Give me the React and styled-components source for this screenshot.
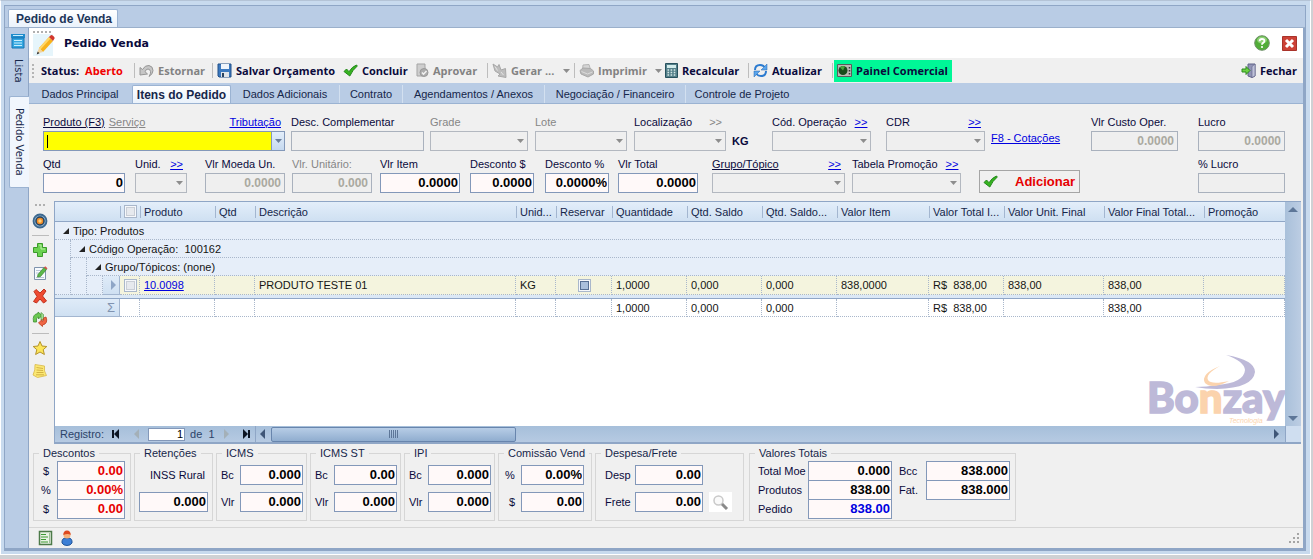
import React, { useId } from "react";
import styled, { createGlobalStyle, css } from "styled-components";

const GlobalStyle = createGlobalStyle`
  * {
    box-sizing: border-box;
  }

  body {
    margin: 0;
    background: #cfd1d4;
    color: #0a0a3c;
    font-family: "Liberation Sans", Arial, sans-serif;
    font-size: 11px;
  }

  button, input, select {
    font-family: inherit;
    font-size: inherit;
    color: inherit;
    margin: 0;
    border-radius: 0;
  }

  svg {
    display: block;
    flex: none;
  }
`;

/* ---------- window ---------- */

const Page = styled.div`
  display: flex;
  min-height: 100vh;
  padding: 0 2px 4px 0;
`;

const Frame = styled.div`
  flex: 1;
  min-width: 0;
  display: flex;
  border: 1px solid #fff;
  border-top-color: #b4c3d6;
  background: #c8daee;
  padding: 4px 4px 3px 3px;
`;

const Window = styled.div`
  flex: 1;
  min-width: 0;
  display: flex;
  flex-direction: column;
  border: 1px solid #8fa6c6;
  background: #b9cce5;
`;

const WindowTabs = styled.div`
  display: flex;
  align-items: flex-end;
  height: 22px;
  padding-left: 3px;
  border-bottom: 1px solid #9bb0cb;
`;

const WindowTab = styled.button`
  height: 18px;
  padding: 0 5px 0 7px;
  border: 1px solid #9bb3d2;
  border-bottom: 0;
  border-radius: 2px 2px 0 0;
  background: linear-gradient(#fff, #eaf2fb);
  color: #1d3558;
  font-size: 12px;
  font-weight: bold;
  white-space: nowrap;
`;

const Body = styled.div`
  flex: 1;
  display: flex;
  min-width: 0;
  border-right: 2px solid #8fa6c6;
  border-bottom: 2px solid #8fa6c6;
`;

const Rail = styled.nav`
  width: 24px;
  flex: none;
  display: flex;
  flex-direction: column;
  align-items: flex-end;
  border-right: 1px solid #8fa6c6;
`;

const RailTab = styled.button`
  display: flex;
  align-items: center;
  justify-content: center;
  gap: 10px;
  width: 20px;
  height: ${(p) => p.$h}px;
  padding: ${(p) => (p.$active ? 0 : "0 0 8px")};
  border: 0;
  background: none;
  writing-mode: vertical-rl;
  color: #16264a;
  font-family: "DejaVu Sans", Verdana, sans-serif;
  font-size: 10px;

  ${(p) => p.$active && css`
    margin-right: -1px;
    border: 1px solid #9bb3d2;
    border-right: 0;
    border-radius: 2px 0 0 2px;
    background: #f1f6fd;
  `}
`;

const Main = styled.main`
  flex: 1;
  min-width: 0;
  display: flex;
  flex-direction: column;
  background: #f0f0f0;
`;

const TitleBar = styled.header`
  display: flex;
  align-items: center;
  height: 30px;
  padding: 0 6px 0 4px;
  background: #fff;
`;

const TitleIcon = styled.div`
  display: flex;
  flex-direction: column;
  gap: 1px;
`;

const Title = styled.h1`
  flex: 1;
  margin: 0 0 0 9px;
  padding-top: 2px;
  font-family: "DejaVu Sans", Verdana, sans-serif;
  font-size: 11px;
  line-height: 16px;
`;

const IconButton = styled.button`
  display: flex;
  align-items: center;
  justify-content: center;
  width: ${(p) => p.$w || 16}px;
  height: ${(p) => p.$h || 16}px;
  padding: 0;
  border: 0;
  background: ${(p) => p.$bg || "none"};
`;

const TitleActions = styled.div`
  display: flex;
  gap: 11px;
`;

/* ---------- toolbar ---------- */

const Toolbar = styled.div`
  display: flex;
  align-items: center;
  height: 25px;
  padding: 0 3px;
  font-family: "Open Sans", "Noto Sans", sans-serif;
  font-size: 11px;
  font-weight: bold;
  white-space: nowrap;
`;

const Grip = styled.span`
  width: 2px;
  height: 14px;
  background: repeating-linear-gradient(#b5b5b5 0 2px, transparent 2px 4px);
`;

const Status = styled.span`
  display: flex;
  gap: 6px;
  width: 99px;
  padding-left: 7px;
`;

const Open = styled.span`
  color: #f00000;
`;

const Tool = styled.button`
  display: flex;
  align-items: center;
  gap: 4px;
  height: 22px;
  width: ${(p) => p.$w}px;
  padding: 0 3px;
  border: 0;
  background: ${(p) => (p.$green ? "#00f797" : "none")};
  color: #0a0a3c;
  font-weight: bold;
  white-space: nowrap;

  &:disabled {
    color: #828282;
  }
`;

const Divider = styled.span`
  width: 1px;
  height: 15px;
  margin: 0 1px;
  background: #bdbdbd;
`;

const Spacer = styled.span`
  flex: 1;
`;

/* ---------- page tabs ---------- */

const Tabs = styled.div`
  display: flex;
  align-items: flex-end;
  height: 21px;
  background: #b9cce5;
  border-bottom: 1px solid #9bb3d2;
`;

const Tab = styled.button`
  height: 18px;
  width: ${(p) => p.$w}px;
  padding: 0;
  border: 0;
  border-right: 1px solid ${(p) => (p.$line ? "#d3e0f0" : "transparent")};
  background: none;
  color: #16264a;
  white-space: nowrap;

  ${(p) => p.$active && css`
    border: 1px solid #9bb3d2;
    border-bottom: 0;
    border-radius: 2px 2px 0 0;
    background: linear-gradient(#fff, #eaf2fb);
    font-size: 12px;
    font-weight: bold;
  `}
`;

/* ---------- form ---------- */

const Form = styled.form`
  display: flex;
  flex-direction: column;
  gap: 4px;
  padding: 9px 18px 8px 14px;
`;

const FormRow = styled.div`
  display: flex;
  align-items: flex-end;
`;

const FieldBox = styled.div`
  width: ${(p) => p.$w}px;
  margin-left: ${(p) => p.$gap || 0}px;
  flex: none;
`;

const FieldHead = styled.div`
  display: flex;
  gap: 4px;
  height: 18px;
  padding-right: 4px;
  line-height: 18px;
  white-space: nowrap;
`;

const FieldLabel = styled.label`
  color: ${(p) => (p.$dim ? "#868686" : "inherit")};
  text-decoration: ${(p) => (p.$under ? "underline" : "none")};
`;

const Anchor = styled.a`
  color: ${(p) => (p.$dim ? "#868686" : "#0000e0")};
  text-decoration: ${(p) => (p.$plain ? "none" : "underline")};
`;

const TextInput = styled.input`
  display: block;
  width: 100%;
  min-width: 0;
  height: 20px;
  padding: 0 1px 1px 2px;
  border: 1px solid #8398b9;
  background: #fff9f9;
  color: ${(p) => p.$color || "#000"};
  font-size: 13px;
  font-weight: bold;
  text-align: right;
  outline: 0;

  &:disabled {
    padding-right: 3px;
    border-color: #a9b1bd;
    background: #efefef;
    color: #aaa9a0;
    font-size: 12px;
  }
`;

const SelectBox = styled.div`
  display: grid;
  align-items: center;

  > * {
    grid-area: 1 / 1;
  }

  > svg {
    justify-self: end;
    margin-right: 4px;
    pointer-events: none;
  }
`;

const Select = styled.select`
  appearance: none;
  width: 100%;
  height: 20px;
  padding: 0 16px 0 3px;
  border: 1px solid #b3b8c0;
  background: #efefef;
  opacity: 1;
`;

const Combo = styled.div`
  display: flex;
  align-items: center;
  height: 20px;
  border: 1px solid #8398b9;
  background: #ff0;
`;

const Caret = styled.span`
  width: 1px;
  height: 13px;
  margin-left: 3px;
  background: #000;
`;

const ComboInput = styled.input`
  flex: 1;
  min-width: 0;
  height: 18px;
  padding: 0 3px;
  border: 0;
  background: none;
  outline: 0;
`;

const ComboButton = styled(IconButton)`
  border-left: 1px solid #8398b9;
`;

const UnitText = styled.strong`
  width: 17px;
  margin-left: 6px;
  line-height: 20px;
`;

const Quotes = styled(Anchor)`
  margin: 0 auto 0 6px;
  line-height: 26px;
  white-space: nowrap;
`;

const AddButton = styled.button`
  display: flex;
  align-items: center;
  justify-content: space-between;
  width: 101px;
  height: 23px;
  margin: 0 auto 0 18px;
  padding: 0 4px 0 3px;
  border: 1px solid #a5a5a5;
  background: #f0f0f0;
  color: #e60000;
  font-size: 13px;
  font-weight: bold;
`;

/* ---------- grid ---------- */

const Middle = styled.section`
  flex: 1;
  display: flex;
  min-height: 0;
  padding-right: 2px;
`;

const SideTools = styled.div`
  display: flex;
  flex-direction: column;
  align-items: center;
  gap: 7px;
  width: 25px;
  padding: 3px 3px 0 0;
  flex: none;
`;

const DotLine = styled.span`
  width: ${(p) => p.$w}px;
  height: 2px;
  background: repeating-linear-gradient(90deg, #b0b0b0 0 2px, transparent 2px 4px);
`;

const SideLine = styled.span`
  width: 17px;
  height: 1px;
  margin: -1px 0;
  background: #bcbcbc;
`;

const GridPanel = styled.div`
  flex: 1;
  min-width: 0;
  display: flex;
  flex-direction: column;
  border: 1px solid #8fa6c6;
  border-right: 0;
  border-bottom: 2px solid #8fa6c6;
  background: #fff;
`;

const GridView = styled.div`
  flex: 1;
  display: flex;
  min-height: 0;
`;

const GridContent = styled.div`
  position: relative;
  flex: 1;
  min-width: 0;
  overflow: hidden;
`;

const Table = styled.table`
  width: 100%;
  table-layout: fixed;
  border-collapse: separate;
  border-spacing: 0;
  color: #141414;
`;

const Th = styled.th`
  height: 20px;
  padding: 0 2px 0 4px;
  border-bottom: 1px solid #8fa6c6;
  background:
    linear-gradient(#a3b6d0, #a3b6d0) 0 4px / ${(p) => (p.$first ? 0 : 1)}px 12px no-repeat,
    linear-gradient(#e3eefa, #cfe0f2);
  color: #16264a;
  font-weight: normal;
  text-align: left;
  white-space: nowrap;
`;

const dotted = "1px dotted #a9b7cb";

const Indent = styled.td`
  padding: 0;
  border-right: ${dotted};
  border-bottom: ${(p) => (p.$last ? dotted : "0")};
  background: #e6eef9;
`;

const GroupCell = styled.td`
  height: 18px;
  padding: 0 0 0 8px;
  border-bottom: ${dotted};
  background: #e6eef9;
  white-space: pre;
`;

const GroupText = styled.span`
  display: flex;
  align-items: center;
  gap: 4px;
  line-height: 16px;
`;

const Td = styled.td`
  height: ${(p) => (p.$sum ? 18 : 19)}px;
  padding: 0 3px 0 4px;
  border-right: ${dotted};
  border-bottom: ${dotted};
  background: ${(p) => (p.$sum ? "#fff" : "#f4f4de")};
  line-height: 14px;
  white-space: pre;
`;

const RowHead = styled.td`
  padding: 0 4px;
  border-right: 1px solid #a3b6d0;
  border-bottom: 1px solid #a3b6d0;
  background: linear-gradient(#dfebf8, #cfe0f2);
  color: #8093b0;
  font-size: 13px;
  line-height: 14px;
  text-align: right;
`;

const SplitCell = styled.td`
  height: 4px;
  padding: 0;
  border-bottom: 1px solid #8fa6c6;
  background: #dbe8f6;
`;

const Check = styled.input`
  appearance: none;
  display: block;
  width: 13px;
  height: 13px;
  margin: ${(p) => (p.$center ? "0 auto" : "0")};
  border: 1px solid #a9b7cb;
  background: ${(p) => (p.$fill ? "#a9bfdc" : "#e6e9ee")};
  box-shadow: inset 0 0 0 1px #f6f8fb, inset 0 0 0 2px ${(p) => (p.$fill ? "#566f94" : "#c9ced6")};
`;

const Logo = styled.div`
  position: absolute;
  right: 0;
  bottom: 0;
`;

const VScroll = styled.div`
  display: flex;
  flex-direction: column;
  align-items: center;
  justify-content: space-between;
  width: 16px;
  padding: 2px 0;
  background: linear-gradient(90deg, #a9c0da, #bccde3);
`;

const NavBar = styled.div`
  display: flex;
  align-items: center;
  height: 16px;
  background: linear-gradient(#a6bfda, #b6cae2);
  color: #2c4368;
`;

const Pager = styled.div`
  display: flex;
  align-items: center;
  width: 201px;
  height: 16px;
  padding-left: 5px;
  border-right: 1px solid #8fa6c6;
  white-space: pre;
`;

const PageInput = styled.input`
  width: 37px;
  height: 13px;
  margin: 0 5px 0 4px;
  padding: 0 1px;
  border: 1px solid #8398b9;
  background: #fff;
  color: #000;
  text-align: right;
`;

const ScrollTrack = styled.div`
  flex: 1;
  display: flex;
  align-items: center;
  padding: 0 3px 0 1px;
`;

const Thumb = styled.div`
  display: flex;
  justify-content: center;
  align-items: center;
  width: 245px;
  height: 15px;
  margin: 0 auto 0 2px;
  border: 1px solid #6885ad;
  border-radius: 2px;
  background: linear-gradient(#b7cde6, #90adcf);
`;

const ThumbGrip = styled.span`
  width: 9px;
  height: 8px;
  background: repeating-linear-gradient(90deg, #5d7698 0 1px, transparent 1px 2px);
`;

const Corner = styled.span`
  width: 16px;
  height: 16px;
  border-left: 1px solid #8fa6c6;
  background: #cfdef0;
`;

/* ---------- totals ---------- */

const Totals = styled.section`
  display: flex;
  align-items: flex-start;
  gap: 3px;
  height: 83px;
  padding: 2px 4px;
`;

const Box = styled.fieldset`
  width: ${(p) => p.$w}px;
  height: 75px;
  min-width: 0;
  margin: 0 0 0 ${(p) => p.$ml || 0}px;
  padding: ${(p) => (p.$tight ? 1 : 5)}px ${(p) => p.$pr}px 0 4px;
  border: 1px solid #d6d6d6;
`;

const Legend = styled.legend`
  margin-left: 1px;
  padding: 0 4px;
  color: #16264a;
  line-height: 14px;
  white-space: nowrap;
`;

const Lines = styled.div`
  display: grid;
  grid-template-columns: ${(p) => p.$cols};
  row-gap: ${(p) => (p.$tight ? 0 : 7)}px;
  align-items: center;

  ${(p) => p.$tight && css`
    grid-auto-rows: 19px;
    align-items: start;
  `}
`;

const LineLabel = styled.label`
  padding-left: ${(p) => p.$pl || 0}px;
  line-height: 20px;
  white-space: nowrap;
`;

const FreteSearch = styled(IconButton)`
  justify-self: end;
`;

const StatusBar = styled.footer`
  display: flex;
  align-items: center;
  gap: 7px;
  height: 21px;
  padding: 0 3px 0 9px;
  border-top: 1px solid #d6d6d6;
`;

/* ---------- icons ---------- */

const Down = ({ color = "#8d8d8d" }) => (
  <svg width="7" height="4"><path d="M0 0h7L3.5 4z" fill={color} /></svg>
);

const Tri = ({ dir, color = "#3f5677", bar }) => {
  const d = {
    left: "M8 1v10L3 6z",
    right: "M4 1v10l5-5z",
    up: "M1 8h10L6 3z",
    down: "M1 4h10L6 9z",
  }[dir];
  return (
    <svg width="12" height="12" viewBox="0 0 12 12" fill={color}>
      <path d={d} />
      {bar && <path d={dir === "left" ? "M1 2h2v8H1z" : "M9 2h2v8H9z"} />}
    </svg>
  );
};

const Expanded = () => (
  <svg width="6" height="6"><path d="M6 0v6H0z" fill="#222" /></svg>
);

const ListIcon = () => (
  <svg width="16" height="16" viewBox="0 0 16 16">
    <path d="M1 1h14v4H1z" fill="#1f8ccc" />
    <path d="M2 5h12v10H2z" fill="#35a7e0" stroke="#1674b5" />
    <path d="M3 2.5h10M4 7.5h8M4 10h8M4 12.5h8" stroke="#c8efff" />
  </svg>
);

const PencilIcon = () => (
  <svg width="22" height="22" viewBox="0 0 22 22">
    <path d="M0 0h20v22H0z" fill="#e6f5fb" />
    <path d="M6 14 16 3l4 4L10 18z" fill="#f7b21c" />
    <path d="m6 14 10-11 1.500 1.500L7.500 15.500z" fill="#ffd768" />
    <path d="m16 3 1.500-1.500q1-1 2.500.2l1 1q1.200 1.200.2 2.300L20 7z" fill="#d2372c" />
    <path d="M6 14 4 19.500 10 18z" fill="#f1d3a0" />
    <path d="m4.700 17.400-1 3 2.800-1.200z" fill="#333" />
  </svg>
);

const HelpIcon = () => (
  <svg width="16" height="16" viewBox="0 0 16 16">
    <circle cx="8" cy="8" r="7.300" fill="#51ad38" stroke="#6e8f68" />
    <ellipse cx="8" cy="5" rx="5" ry="3.500" fill="#8dd074" />
    <path d="M5.600 6.200Q5.700 4 8 4q2.400 0 2.400 2 0 1.200-1.300 1.900Q8 8.500 8 9.700" fill="none" stroke="#fff" strokeWidth="1.800" />
    <circle cx="8" cy="12" r="1.100" fill="#fff" />
  </svg>
);

const CloseIcon = () => (
  <svg width="15" height="15" viewBox="0 0 15 15">
    <path d="M.5.5h14v14H.5z" fill="#cc4136" stroke="#a9332a" />
    <path d="m4 4 7 7m0-7-7 7" stroke="#fff" strokeWidth="3" />
  </svg>
);

const UndoIcon = () => (
  <svg width="15" height="15" viewBox="0 0 15 15">
    <path d="M1 12V4.500l2.500 2Q6 2 10 2.500q4 .8 4 5Q14 11 10 13.500q2-3 1.500-5Q11 6 9 6 7 6 6 8.700L8.500 11z" fill="#c6c6c6" stroke="#969696" />
  </svg>
);

const SaveIcon = () => (
  <svg width="15" height="15" viewBox="0 0 15 15">
    <path d="M1 1h13v13H2l-1-1z" fill="#3b79bf" stroke="#235089" />
    <path d="M4 1h8v5H4z" fill="#eef4fb" />
    <path d="M4 9h8v5H4z" fill="#dfe4ea" />
    <path d="M5 10h2v4H5z" fill="#28425f" />
  </svg>
);

const CheckIcon = () => (
  <svg width="15" height="15" viewBox="0 0 15 15">
    <path d="M1 8.500 3.500 6 6 8.700Q9 3.700 13.500 2l.8 1Q9.500 7 6.800 13z" fill="#37b420" stroke="#22861a" />
  </svg>
);

const ApproveIcon = () => (
  <svg width="13" height="15" viewBox="0 0 13 15">
    <path d="M1 1h8v3l1 7-3 2H1z" fill="#cecece" stroke="#a5a5a5" />
    <circle cx="8" cy="9.500" r="4" fill="#adadad" stroke="#999" />
    <path d="m6 9.500 1.500 1.700L10.500 8" fill="none" stroke="#f3f3f3" strokeWidth="1.500" />
  </svg>
);

const GenerateIcon = () => (
  <svg width="15" height="15" viewBox="0 0 15 15">
    <path d="m1 1 4.500 3L7 1.500 9 7l4.500-1.500.5 9-8-1.500 2-2-5-3z" fill="#bdbdbd" stroke="#a8a8a8" />
    <path d="m3 3.500 2.500 4M9 9l2.500 3" stroke="#e4e4e4" />
  </svg>
);

const PrinterIcon = () => (
  <svg width="15" height="15" viewBox="0 0 15 15">
    <path d="m4 2 6-.5 1.500 5-8 .5z" fill="#d6d6d6" stroke="#b5b5b5" />
    <path d="m1 7.500 3-2.500 7.500.5L14.500 8v3L9 14l-7-3z" fill="#bababa" stroke="#a8a8a8" />
    <path d="m2.500 8.500 6 2.500 5-2" fill="none" stroke="#dcdcdc" />
  </svg>
);

const CalcIcon = () => (
  <svg width="13" height="15" viewBox="0 0 13 15">
    <path d="M.5.5h12v14H.5z" fill="#54808a" stroke="#28525f" />
    <path d="M2 2h9v3H2z" fill="#d3ecec" />
    <path d="M2.500 7h8M2.500 9.500h8M2.500 12h8" stroke="#d5e8e8" strokeWidth="1.500" strokeDasharray="1.600 1.500" />
  </svg>
);

const RefreshIcon = () => (
  <svg width="15" height="15" viewBox="0 0 15 15">
    <path d="M2 7q0-5 5-5 3 0 4.500 2" fill="none" stroke="#2c7bd0" strokeWidth="2" />
    <path d="M14 1v6H8z" fill="#5aa5ec" stroke="#2465b0" strokeWidth=".5" />
    <path d="M13 8q0 5-5 5-3 0-4.500-2" fill="none" stroke="#2c7bd0" strokeWidth="2" />
    <path d="M1 14V8h6z" fill="#5aa5ec" stroke="#2465b0" strokeWidth=".5" />
  </svg>
);

const PanelIcon = () => (
  <svg width="15" height="13" viewBox="0 0 15 13">
    <path d="M.5.5h14v12H.5z" fill="#b9b9b4" stroke="#5b5b5b" />
    <circle cx="6" cy="6.500" r="4.500" fill="#184c1d" />
    <path d="M6 6.500 3 3.500a4.500 4.500 0 0 1 5-1z" fill="#47a63c" />
    <path d="M12.500 3v1.500m0 1.500v1.500m0 1.500v1.500" stroke="#333" strokeWidth="1.500" />
  </svg>
);

const ExitIcon = () => (
  <svg width="15" height="15" viewBox="0 0 15 15">
    <path d="m7 1 7 0v12l-3 1.500L7 13z" fill="#9093b5" stroke="#5f6288" />
    <path d="M11 3.500 14 1v12l-3 1.500z" fill="#bfc2da" stroke="#5f6288" strokeWidth=".6" />
    <path d="M1 6h4V3.500L9 7.500 5 11.500V9H1z" fill="#6bd142" stroke="#2c8a1c" />
  </svg>
);

const TargetIcon = () => (
  <svg width="16" height="16" viewBox="0 0 16 16">
    <circle cx="8" cy="8" r="6.500" fill="#8fb4d3" stroke="#3c688f" strokeWidth="1.800" />
    <circle cx="8" cy="8" r="4" fill="#f08a25" stroke="#24435f" strokeWidth="1.500" />
    <circle cx="8" cy="8" r="1.700" fill="#ffd27a" />
  </svg>
);

const PlusIcon = () => (
  <svg width="16" height="16" viewBox="0 0 16 16">
    <path d="M5.500 1.500h5v4h4v5h-4v4h-5v-4h-4v-5h4z" fill="#6cd250" stroke="#3c9a2b" />
    <path d="M7 3h2v4h4" fill="none" stroke="#b7f0a3" />
  </svg>
);

const EditIcon = () => (
  <svg width="16" height="16" viewBox="0 0 16 16">
    <path d="M2.500 2.500h11v12h-11z" fill="#f7fafd" stroke="#7f93ad" />
    <path d="M4 5.500h5M4 8h4M4 12.500h8" stroke="#b8c5d6" />
    <path d="m6 9.500 6-7 2.500 2-6 7L5.500 12z" fill="#5cb84a" stroke="#38812b" strokeWidth=".7" />
    <path d="m12 2.500 1.200-1.200 2.300 2-1 1.200z" fill="#d9534a" />
  </svg>
);

const DeleteIcon = () => (
  <svg width="16" height="16" viewBox="0 0 16 16">
    <path d="m2 3.500 2-2L8 5l4-4 2 2-3.500 5 4 5-3 2L8 11l-3.500 4-3-1.500L5 8.500z" fill="#ee4a30" stroke="#c0321d" />
  </svg>
);

const SwapIcon = () => (
  <svg width="16" height="16" viewBox="0 0 16 16">
    <path d="M1.500 11Q0 3 6 2.500V1l4 3.500L6.500 8V6Q3.500 6.500 4.500 11z" fill="#6cc850" stroke="#3d9030" strokeWidth=".8" />
    <path d="M9 4V1.500l2.500 2V9H9z" fill="#a5dc92" stroke="#3d9030" strokeWidth=".6" />
    <path d="M14 6q2.500 6.500-3.500 8V15.500L6.500 12 10 8.500v2Q12.500 10 11.500 7z" fill="#ef6544" stroke="#bb3c1f" strokeWidth=".8" />
  </svg>
);

const StarIcon = () => (
  <svg width="16" height="16" viewBox="0 0 16 16">
    <path d="m8 1.500 2 4.500 4.800.5-3.600 3.200 1.200 4.800L8 12l-4.400 2.500 1.200-4.800L1.200 6.500 6 6z" fill="#fce55a" stroke="#b5932a" />
  </svg>
);

const NoteIcon = () => (
  <svg width="16" height="16" viewBox="0 0 16 16">
    <path d="M3 1.500 12.500 3q-1 5 2 9.500L5.500 14.500 1 12Q3.500 7 3 1.500z" fill="#fbe873" stroke="#d8b847" strokeWidth=".8" />
    <path d="m4.500 4.500 6.500 1M4.500 7l6.500.5M4.500 9.500h7M4 11.800h8" stroke="#c9a33a" strokeWidth=".8" />
  </svg>
);

const SearchIcon = () => (
  <svg width="17" height="17" viewBox="0 0 17 17">
    <circle cx="6.500" cy="6.500" r="4.500" fill="#fafafa" stroke="#c9c9c9" strokeWidth="1.500" />
    <path d="m10 10 5 5" stroke="#8a8a8a" strokeWidth="3" />
  </svg>
);

const SheetIcon = () => (
  <svg width="15" height="16" viewBox="0 0 15 16">
    <path d="M1.500 1.500h12v13h-12z" fill="#e8f3e4" stroke="#4c7a48" strokeWidth="1.500" />
    <path d="M3 4.500h5M3 7h7M3 9.500h5M3 12h7" stroke="#3e9a35" strokeWidth="1.200" />
    <path d="M11.500 3v10" stroke="#9dbf98" />
  </svg>
);

const UserIcon = () => (
  <svg width="14" height="16" viewBox="0 0 14 16">
    <path d="M2 13q-.5-5 4-5h2q4.500 0 4 5-1.500 2.500-5 2.500T2 13z" fill="#3c7fd6" stroke="#225699" />
    <circle cx="7" cy="5" r="3.500" fill="#f6b27a" />
    <path d="M3.300 5q0-4.500 3.700-4.500T10.700 5Q8 3 3.300 5z" fill="#dd4a1f" />
  </svg>
);

const GripCorner = () => (
  <svg width="11" height="11" viewBox="0 0 11 11" fill="#a5a5a5">
    <path d="M8 0h2v2H8zM8 4h2v2H8zM4 4h2v2H4zM8 8h2v2H8zM4 8h2v2H4zM0 8h2v2H0z" />
  </svg>
);

const BonzayLogo = () => (
  <svg width="140" height="72" viewBox="0 0 140 72" role="img" aria-label="Bonzay Tecnologia">
    <path d="M81 1q29 5 29 17-2 16-38 17-12 0-22-2 12 0 22-2 27-2 28-15Q99 7 81 1z" fill="#bdb9d8" />
    <path d="M75 12q-15 8-12 14 3 5 21 1-17 9-24 2-5-9 15-17z" fill="#fbd3ad" />
    <g fontFamily="Lato, sans-serif" fontWeight="900" fontSize="42" fill="#bdb9d8" stroke="#bdb9d8" strokeWidth="1.500">
      <text x="2" y="59">Bo<tspan fill="#fbd3ad" stroke="#fbd3ad">n</tspan>zay</text>
    </g>
    <text x="84" y="69" fontFamily="Liberation Sans, sans-serif" fontStyle="italic" fontSize="7" fill="#fbd3ad">Tecnologia</text>
  </svg>
);

/* ---------- parts ---------- */

const Field = ({ label, w, gap, link, linkDim, dim, under, select, value = "", disabled }) => {
  const id = useId();
  return (
    <FieldBox $w={w} $gap={gap}>
      <FieldHead>
        <FieldLabel htmlFor={id} $dim={dim} $under={under}>{label}</FieldLabel>
        {link && <Spacer />}
        {link && <Anchor href="#" $dim={linkDim} $plain={linkDim}>&gt;&gt;</Anchor>}
      </FieldHead>
      {select ? (
        <SelectBox>
          <Select id={id} disabled><option value=""></option></Select>
          <Down />
        </SelectBox>
      ) : (
        <TextInput id={id} defaultValue={value} disabled={disabled} />
      )}
    </FieldBox>
  );
};

const Line = ({ label, value, color, pl }) => {
  const id = useId();
  return (
    <>
      <LineLabel htmlFor={id} $pl={pl}>{label}</LineLabel>
      <TextInput id={id} defaultValue={value} $color={color} />
    </>
  );
};

const tabs = [
  { text: "Dados Principal", w: 103 },
  { text: "Itens do Pedido", w: 99, active: true },
  { text: "Dados Adicionais", w: 109, line: true },
  { text: "Contrato", w: 63, line: true },
  { text: "Agendamentos / Anexos", w: 142, line: true },
  { text: "Negociação / Financeiro", w: 141, line: true },
  { text: "Controle de Projeto", w: 113 },
];

const columns = [
  { title: "Produto", w: 75 },
  { title: "Qtd", w: 40 },
  { title: "Descrição" },
  { title: "Unid...", w: 40 },
  { title: "Reservar", w: 56 },
  { title: "Quantidade", w: 75 },
  { title: "Qtd. Saldo", w: 75 },
  { title: "Qtd. Saldo...", w: 75 },
  { title: "Valor Item", w: 92 },
  { title: "Valor Total I...", w: 75 },
  { title: "Valor Unit. Final", w: 100 },
  { title: "Valor Final Total...", w: 100 },
  { title: "Promoção", w: 81 },
];

const summary = ["", "", "", "", "", "1,0000", "0,000", "0,000", "", "R$  838,00", "", "838,00", ""];

const ItemsTable = () => (
  <Table>
    <colgroup>
      <col style={{ width: 16 }} />
      <col style={{ width: 16 }} />
      <col style={{ width: 16 }} />
      <col style={{ width: 17 }} />
      <col style={{ width: 20 }} />
      {columns.map((c) => <col key={c.title} style={{ width: c.w }} />)}
    </colgroup>
    <thead>
      <tr>
        <Th colSpan={4} $first />
        <Th><Check type="checkbox" aria-label="Selecionar todos" /></Th>
        {columns.map((c) => <Th key={c.title}>{c.title}</Th>)}
      </tr>
    </thead>
    <tbody>
      <tr>
        <GroupCell colSpan={18}><GroupText><Expanded />Tipo: Produtos</GroupText></GroupCell>
      </tr>
      <tr>
        <Indent />
        <GroupCell colSpan={17}><GroupText><Expanded />{"Código Operação:  100162"}</GroupText></GroupCell>
      </tr>
      <tr>
        <Indent />
        <Indent />
        <GroupCell colSpan={16}><GroupText><Expanded />Grupo/Tópicos: (none)</GroupText></GroupCell>
      </tr>
      <tr>
        <Indent $last />
        <Indent $last />
        <Indent $last />
        <RowHead><Tri dir="right" color="#8fa6c6" /></RowHead>
        <Td><Check type="checkbox" aria-label="Selecionar item" /></Td>
        <Td><Anchor href="#">10.0098</Anchor></Td>
        <Td />
        <Td>PRODUTO TESTE 01</Td>
        <Td>KG</Td>
        <Td><Check type="checkbox" $center $fill aria-label="Reservar" /></Td>
        <Td>1,0000</Td>
        <Td>0,000</Td>
        <Td>0,000</Td>
        <Td>838,0000</Td>
        <Td>{"R$  838,00"}</Td>
        <Td>838,00</Td>
        <Td>838,00</Td>
        <Td />
      </tr>
      <tr>
        <SplitCell colSpan={18} />
      </tr>
      <tr>
        <RowHead colSpan={4}>Σ</RowHead>
        <Td $sum />
        {summary.map((v, i) => <Td key={i} $sum>{v}</Td>)}
      </tr>
    </tbody>
  </Table>
);

const App = () => {
  return (
    <>
      <GlobalStyle />
      <Page>
        <Frame>
          <Window>
            <WindowTabs>
              <WindowTab>Pedido de Venda</WindowTab>
            </WindowTabs>
            <Body>
              <Rail>
                <RailTab $h={68}><ListIcon />Lista</RailTab>
                <RailTab $h={92} $active>Pedido Venda</RailTab>
              </Rail>
              <Main>
                <TitleBar>
                  <TitleIcon>
                    <DotLine $w={18} />
                    <PencilIcon />
                  </TitleIcon>
                  <Title>Pedido Venda</Title>
                  <TitleActions>
                    <IconButton aria-label="Ajuda"><HelpIcon /></IconButton>
                    <IconButton aria-label="Fechar janela"><CloseIcon /></IconButton>
                  </TitleActions>
                </TitleBar>

                <Toolbar>
                  <Grip />
                  <Status>Status: <Open>Aberto</Open></Status>
                  <Divider />
                  <Tool $w={75} disabled><UndoIcon />Estornar</Tool>
                  <Divider />
                  <Tool $w={126}><SaveIcon />Salvar Orçamento</Tool>
                  <Tool $w={73}><CheckIcon />Concluir</Tool>
                  <Tool $w={73} disabled><ApproveIcon />Aprovar</Tool>
                  <Divider />
                  <Tool $w={84} disabled><GenerateIcon />Gerar ...<Spacer /><Down /></Tool>
                  <Divider />
                  <Tool $w={86} disabled><PrinterIcon />Imprimir<Spacer /><Down /></Tool>
                  <Tool $w={85}><CalcIcon />Recalcular</Tool>
                  <Divider />
                  <Tool $w={81}><RefreshIcon />Atualizar</Tool>
                  <Divider />
                  <Tool $w={118} $green><PanelIcon />Painel Comercial</Tool>
                  <Spacer />
                  <Tool><ExitIcon />Fechar</Tool>
                </Toolbar>

                <Tabs role="tablist">
                  {tabs.map((t) => (
                    <Tab key={t.text} role="tab" aria-selected={!!t.active} $w={t.w} $active={t.active} $line={t.line}>
                      {t.text}
                    </Tab>
                  ))}
                </Tabs>

                <Form onSubmit={(e) => e.preventDefault()}>
                  <FormRow>
                    <FieldBox $w={242}>
                      <FieldHead>
                        <FieldLabel htmlFor="produto" $under>Produto (F3)</FieldLabel>
                        <Anchor href="#" $dim>Serviço</Anchor>
                        <Spacer />
                        <Anchor href="#">Tributação</Anchor>
                      </FieldHead>
                      <Combo>
                        <Caret />
                        <ComboInput id="produto" />
                        <ComboButton type="button" $w={13} $h={18} $bg="linear-gradient(#e3eefa, #c6d9ef)" aria-label="Abrir lista">
                          <Down color="#6b7f9c" />
                        </ComboButton>
                      </Combo>
                    </FieldBox>
                    <Field label="Desc. Complementar" w={133} gap={6} disabled />
                    <Field label="Grade" w={98} gap={6} dim select />
                    <Field label="Lote" w={92} gap={7} dim select />
                    <Field label="Localização" w={92} gap={7} select link linkDim />
                    <UnitText>KG</UnitText>
                    <Field label="Cód. Operação" w={99} gap={23} select link />
                    <Field label="CDR" w={99} gap={15} select link />
                    <Quotes href="#">F8 - Cotações</Quotes>
                    <Field label="Vlr Custo Oper." w={87} value="0.0000" disabled />
                    <Field label="Lucro" w={87} gap={20} value="0.0000" disabled />
                  </FormRow>
                  <FormRow>
                    <Field label="Qtd" w={82} value="0" />
                    <Field label="Unid." w={52} gap={10} select link />
                    <Field label="Vlr Moeda Un." w={80} gap={18} value="0.0000" disabled />
                    <Field label="Vlr. Unitário:" w={80} gap={7} value="0.000" dim disabled />
                    <Field label="Vlr Item" w={80} gap={8} value="0.0000" />
                    <Field label="Desconto $" w={64} gap={10} value="0.0000" />
                    <Field label="Desconto %" w={64} gap={11} value="0.0000%" />
                    <Field label="Vlr Total" w={80} gap={9} value="0.0000" />
                    <Field label="Grupo/Tópico" w={133} gap={14} under select link />
                    <Field label="Tabela Promoção" w={109} gap={7} select link />
                    <AddButton type="button"><CheckIcon />Adicionar</AddButton>
                    <Field label="% Lucro" w={87} disabled />
                  </FormRow>
                </Form>

                <Middle>
                  <SideTools>
                    <DotLine $w={10} />
                    <IconButton aria-label="Visualizar"><TargetIcon /></IconButton>
                    <SideLine />
                    <IconButton aria-label="Adicionar item"><PlusIcon /></IconButton>
                    <IconButton aria-label="Editar item"><EditIcon /></IconButton>
                    <IconButton aria-label="Excluir item"><DeleteIcon /></IconButton>
                    <IconButton aria-label="Trocar item"><SwapIcon /></IconButton>
                    <SideLine />
                    <IconButton aria-label="Favoritos"><StarIcon /></IconButton>
                    <IconButton aria-label="Notas"><NoteIcon /></IconButton>
                  </SideTools>
                  <GridPanel>
                    <GridView>
                      <GridContent>
                        <ItemsTable />
                        <Logo><BonzayLogo /></Logo>
                      </GridContent>
                      <VScroll>
                        <Tri dir="up" color="#5d7698" />
                        <Tri dir="down" color="#5d7698" />
                      </VScroll>
                    </GridView>
                    <NavBar>
                      <Pager>
                        Registro:
                        <IconButton $w={26} $h={14} aria-label="Primeiro"><Tri dir="left" bar color="#0c1524" /></IconButton>
                        <IconButton $w={14} $h={14} aria-label="Anterior"><Tri dir="left" color="#a4b0b8" /></IconButton>
                        <PageInput aria-label="Registro atual" defaultValue="1" />
                        {"de  1"}
                        <IconButton $w={22} $h={14} aria-label="Próximo"><Tri dir="right" color="#a4b0b8" /></IconButton>
                        <IconButton $w={16} $h={14} aria-label="Último"><Tri dir="right" bar color="#0c1524" /></IconButton>
                      </Pager>
                      <ScrollTrack>
                        <Tri dir="left" />
                        <Thumb><ThumbGrip /></Thumb>
                        <Tri dir="right" />
                      </ScrollTrack>
                      <Corner />
                    </NavBar>
                  </GridPanel>
                </Middle>

                <Totals>
                  <Box $w={98} $pr={5} $tight>
                    <Legend>Descontos</Legend>
                    <Lines $cols="19px 1fr" $tight>
                      <Line label="$" value="0.00" color="#e60000" pl={5} />
                      <Line label="%" value="0.00%" color="#e60000" pl={3} />
                      <Line label="$" value="0.00" color="#e60000" pl={5} />
                    </Lines>
                  </Box>
                  <Box $w={79} $pr={4}>
                    <Legend>Retenções</Legend>
                    <Lines $cols="1fr">
                      <Line label="INSS Rural" value="0.000" pl={11} />
                    </Lines>
                  </Box>
                  <Box $w={91} $pr={3}>
                    <Legend>ICMS</Legend>
                    <Lines $cols="19px 1fr">
                      <Line label="Bc" value="0.000" />
                      <Line label="Vlr" value="0.000" />
                    </Lines>
                  </Box>
                  <Box $w={91} $pr={3}>
                    <Legend>ICMS ST</Legend>
                    <Lines $cols="19px 1fr">
                      <Line label="Bc" value="0.00" />
                      <Line label="Vlr" value="0.000" />
                    </Lines>
                  </Box>
                  <Box $w={91} $pr={3}>
                    <Legend>IPI</Legend>
                    <Lines $cols="19px 1fr">
                      <Line label="Bc" value="0.000" />
                      <Line label="Vlr" value="0.000" />
                    </Lines>
                  </Box>
                  <Box $w={94} $pr={7}>
                    <Legend>Comissão Vend</Legend>
                    <Lines $cols="18px 1fr">
                      <Line label="%" value="0.00%" pl={2} />
                      <Line label="$" value="0.00" pl={6} />
                    </Lines>
                  </Box>
                  <Box $w={149} $pr={11}>
                    <Legend>Despesa/Frete</Legend>
                    <Lines $cols="35px 1fr 29px">
                      <Line label="Desp" value="0.00" pl={5} />
                      <span />
                      <Line label="Frete" value="0.00" pl={5} />
                      <FreteSearch type="button" $w={23} $h={20} $bg="#fff" aria-label="Buscar frete"><SearchIcon /></FreteSearch>
                    </Lines>
                  </Box>
                  <Box $w={267} $pr={5} $ml={2} $tight>
                    <Legend>Valores Totais</Legend>
                    <Lines $cols="54px 84px 34px 84px" $tight>
                      <Line label="Total Moe" value="0.000" pl={4} />
                      <Line label="Bcc" value="838.000" pl={7} />
                      <Line label="Produtos" value="838.00" pl={4} />
                      <Line label="Fat." value="838.000" pl={7} />
                      <Line label="Pedido" value="838.00" color="#0000e0" pl={4} />
                    </Lines>
                  </Box>
                </Totals>

                <StatusBar>
                  <SheetIcon />
                  <UserIcon />
                  <Spacer />
                  <GripCorner />
                </StatusBar>
              </Main>
            </Body>
          </Window>
        </Frame>
      </Page>
    </>
  );
};

export default App;
